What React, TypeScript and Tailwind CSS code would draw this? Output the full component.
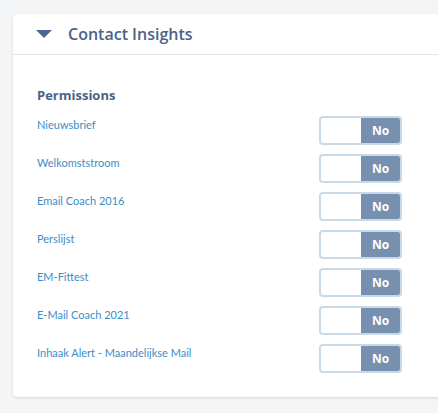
import React from "react";

const items = [
  "Nieuwsbrief",
  "Welkomststroom",
  "Email Coach 2016",
  "Perslijst",
  "EM-Fittest",
  "E-Mail Coach 2021",
  "Inhaak Alert - Maandelijkse Mail",
];

function Toggle() {
  return (
    <div className="flex h-[29px] w-[83px] overflow-hidden rounded-[4px] border-2 border-[#c9d9e6] bg-white">
      <div className="w-[40px]" />
      <div className="flex flex-1 items-center justify-center bg-[#7890b0] text-[12px] font-bold text-white">
        No
      </div>
    </div>
  );
}

export default function App() {
  return (
    <div
      className="h-[413px] w-[438px] overflow-hidden bg-[#f4f5f7] pl-[13px] pt-[14px]"
      style={{ fontFamily: '"Open Sans", "Liberation Sans", sans-serif' }}
    >
      <div className="w-[440px] rounded-[4px] bg-white shadow-[0_1px_3px_rgba(0,0,0,0.12)]">
        <div className="flex h-[41px] items-center border-b border-[#e2e5e9] pl-[23px]">
          <svg width="16" height="8" viewBox="0 0 16 8" className="mr-[16px]">
            <polygon points="0,0 16,0 8,8" fill="#4b6690" />
          </svg>
          <span className="text-[16px] font-semibold text-[#4a6387]">Contact Insights</span>
        </div>
        <div className="pl-[24px] pb-[24px] pt-[31px]">
          <div className="mb-[12px] text-[13px] font-bold leading-[18px] text-[#4b6283]">Permissions</div>
          <div className="flex w-[365px] flex-col gap-[9px]">
            {items.map((t) => (
              <div key={t} className="flex items-start justify-between">
                <span
                  className="pt-[1px] text-[11px] leading-[15px] text-[#3d8dc6]"
                  style={{ fontFamily: 'Lato, "Open Sans", sans-serif' }}
                >
                  {t}
                </span>
                <Toggle />
              </div>
            ))}
          </div>
        </div>
      </div>
    </div>
  );
}
